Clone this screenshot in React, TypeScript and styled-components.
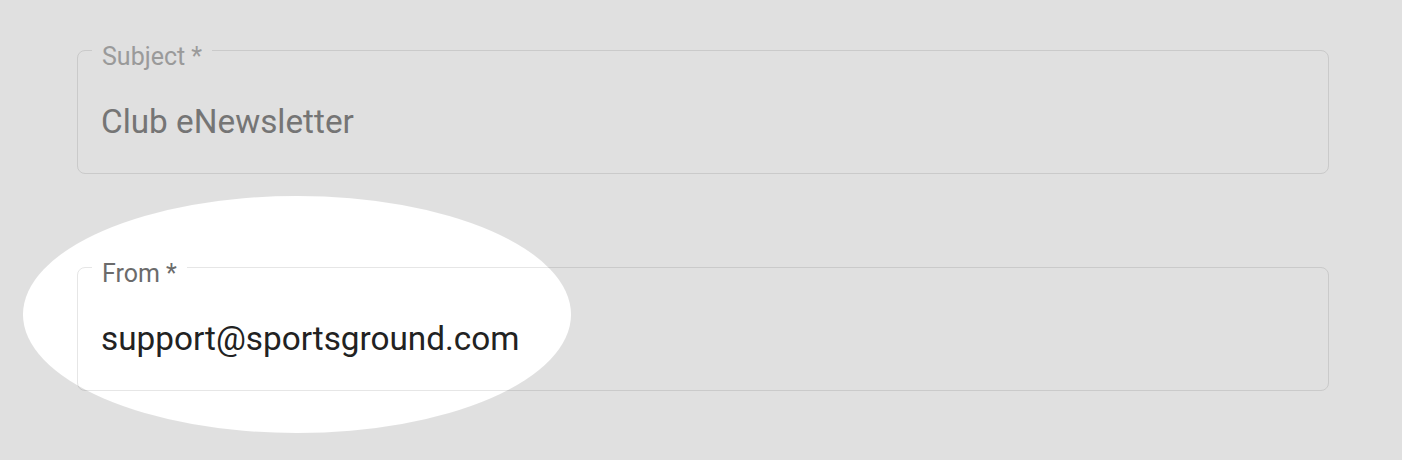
import styled, { createGlobalStyle } from "styled-components";

interface FieldProps {
  label: string;
  value: string;
  muted?: boolean;
}

const Field = ({ label, value, muted = false }: FieldProps) => {
  return (
    <S.Field>
      <S.Label $muted={muted}>{label}</S.Label>
      <S.Value $muted={muted}>{value}</S.Value>
    </S.Field>
  );
};

const App = () => {
  return (
    <>
      <GlobalStyle />
      <S.Page>
        <S.Form>
          <Field label="Subject *" value="Club eNewsletter" muted />
          <Field label="From *" value="support@sportsground.com" />
        </S.Form>
        {/* 강조 영역: 바깥은 회색으로 덮고 타원 안만 밝게 */}
        <S.Spotlight />
      </S.Page>
    </>
  );
};

export default App;

const GlobalStyle = createGlobalStyle`
  html, body {
    margin: 0;
    padding: 0;
    background: #ffffff;
  }

  body {
    font-family: Roboto, "Liberation Sans", sans-serif;
    overflow: hidden;
  }
`;

const S = {
  Page: styled.main`
    position: relative;
    box-sizing: border-box;
    width: 1402px;
    height: 460px;
    padding: 50px 73px 0 77px;
    background: #ffffff;
    overflow: hidden;
  `,

  Form: styled.div`
    display: flex;
    flex-direction: column;
    gap: 93px;
  `,

  Field: styled.div`
    position: relative;
    box-sizing: border-box;
    height: 124px;
    padding: 51px 22px 30px 23px;
    border: 1.5px solid #e6e6e6;
    border-radius: 8px;
  `,

  Label: styled.span<{ $muted: boolean }>`
    position: absolute;
    top: -7px;
    left: 14px;
    padding: 0 10px;
    background: #ffffff;
    font-size: 25px;
    line-height: 25px;
    color: ${({ $muted }) => ($muted ? "#b0b0b0" : "#6b6b6b")};
  `,

  Value: styled.div<{ $muted: boolean }>`
    font-size: 33.3px;
    line-height: 40px;
    color: ${({ $muted }) => ($muted ? "#868686" : "#222222")};
  `,

  Spotlight: styled.div`
    position: absolute;
    left: 23px;
    top: 196px;
    width: 548px;
    height: 237px;
    border-radius: 50%;
    box-shadow: 0 0 0 3000px rgba(0, 0, 0, 0.12);
    pointer-events: none;
  `,
};
